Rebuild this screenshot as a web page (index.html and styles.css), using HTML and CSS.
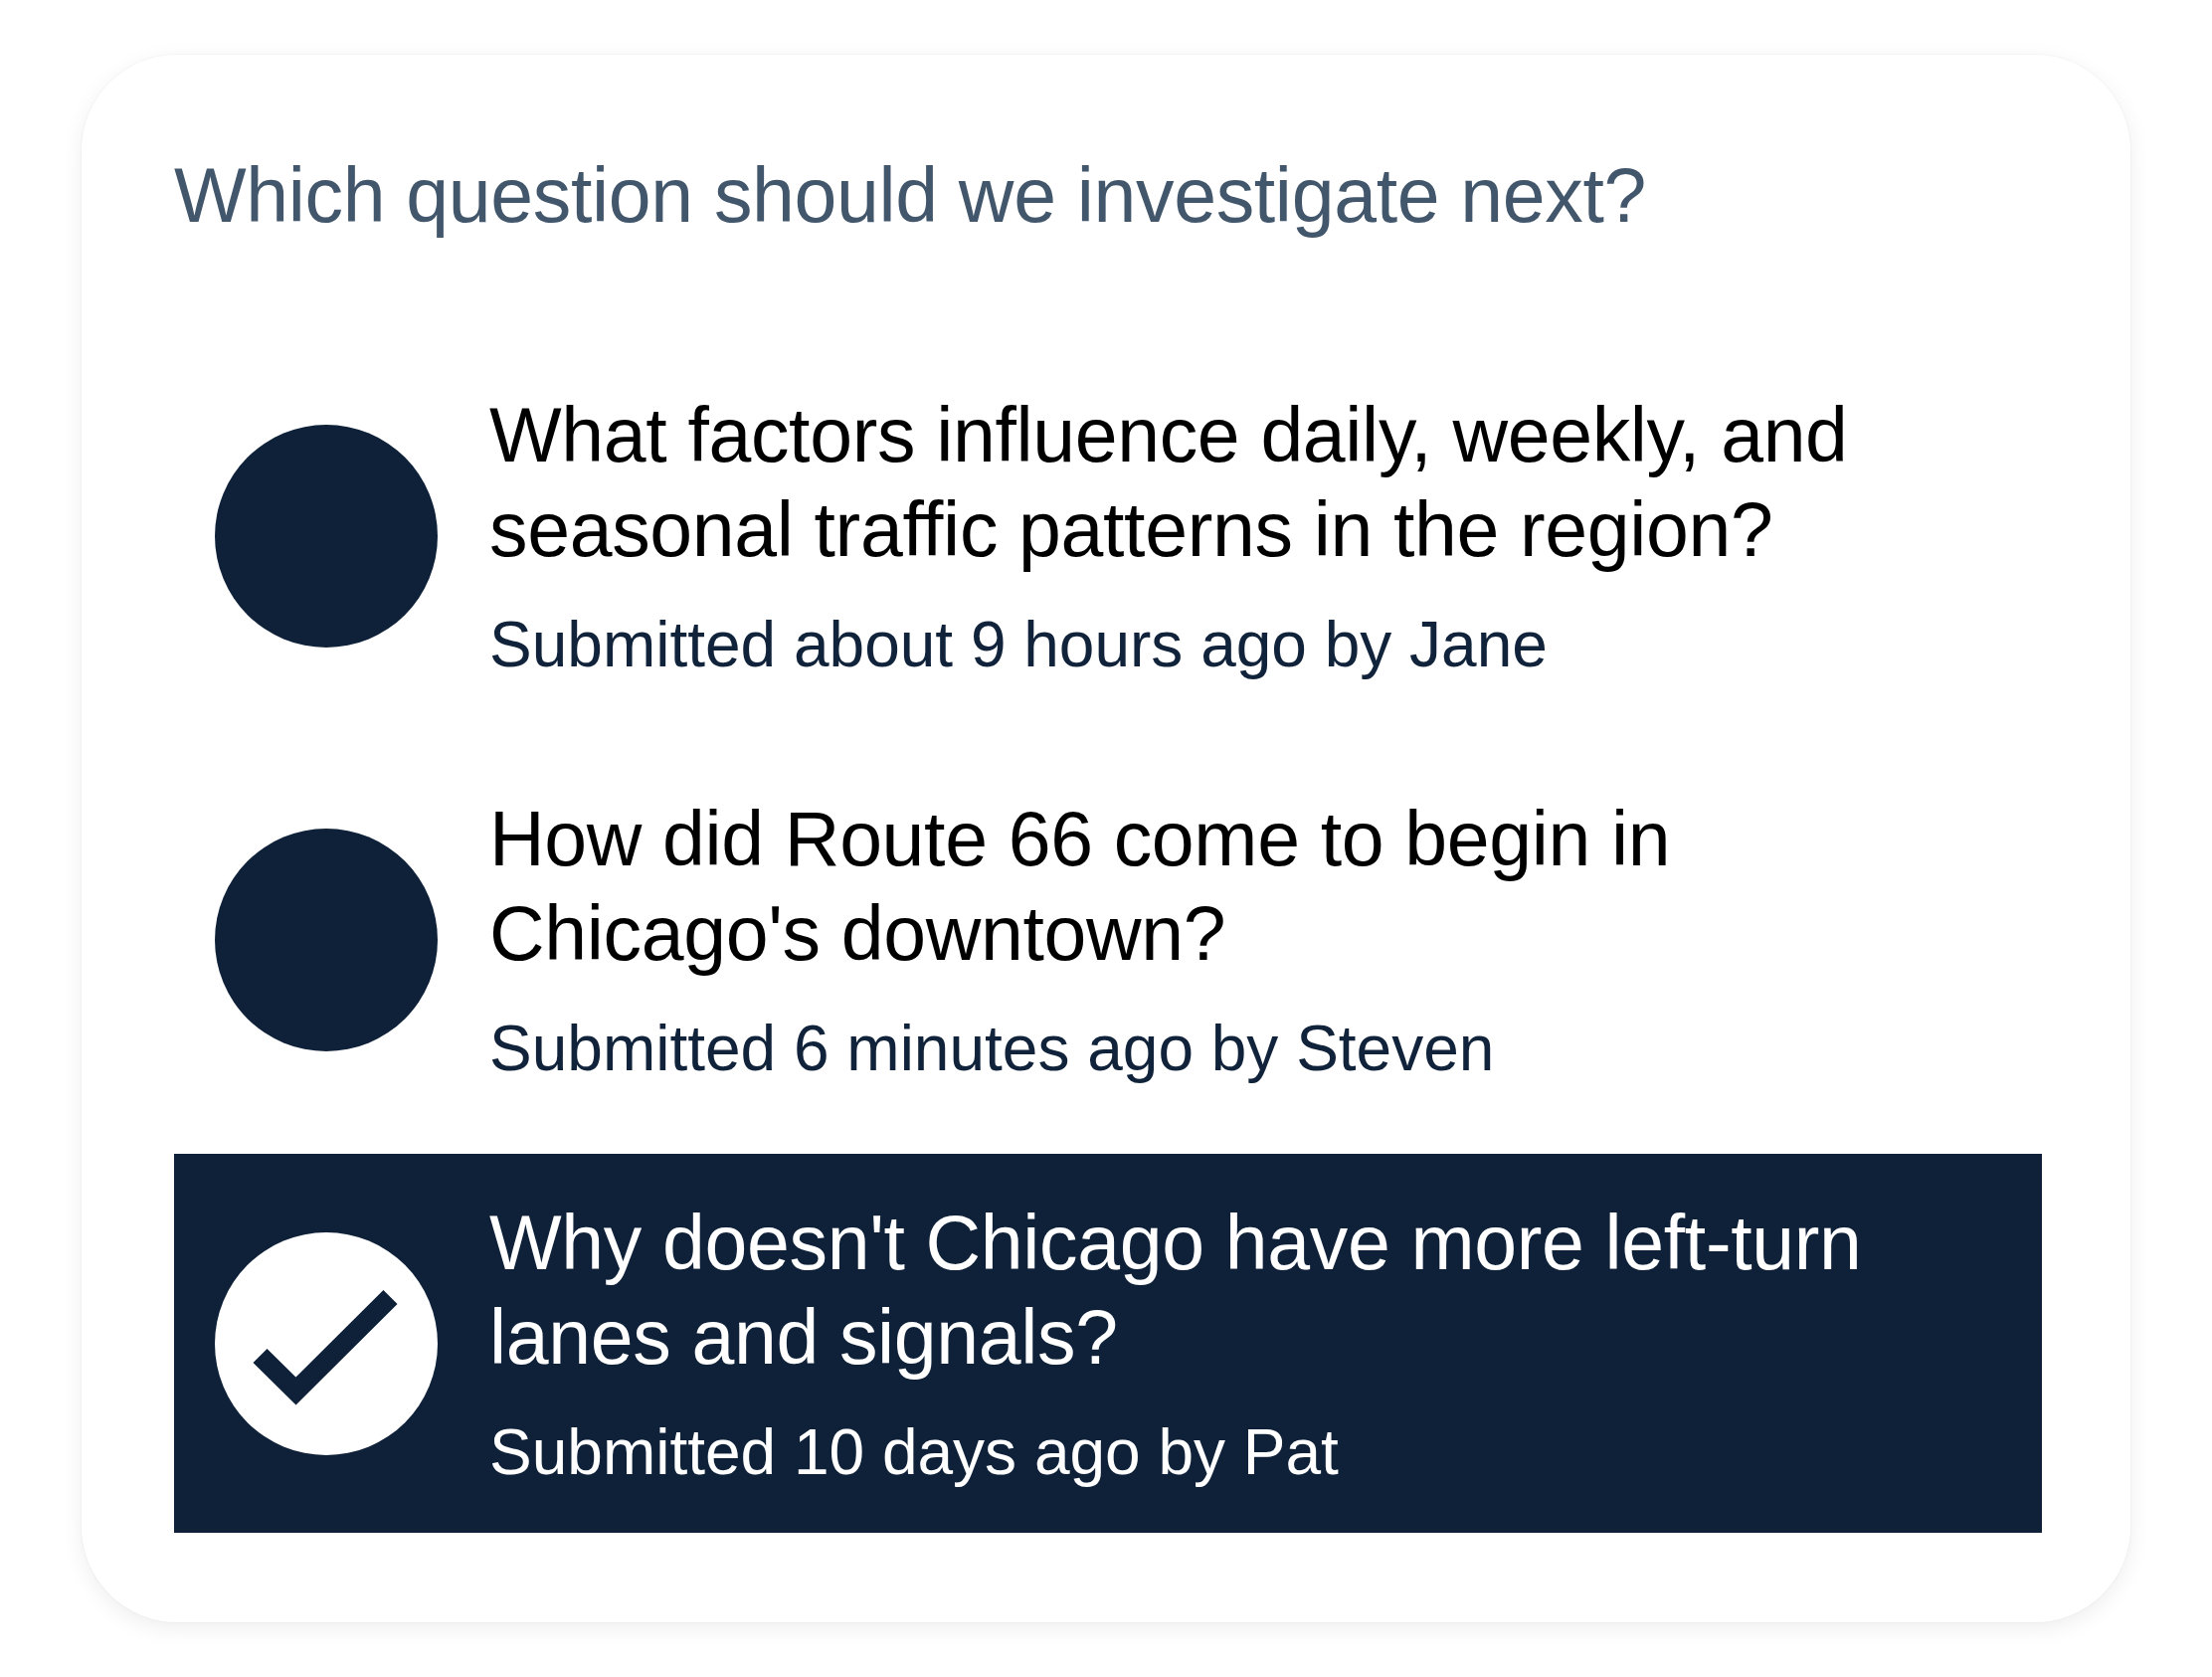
FILE: index.html
```html
<!DOCTYPE html>
<html lang="en">
<head>
<meta charset="utf-8">
<title>Which question should we investigate next?</title>
<link rel="stylesheet" href="styles.css">
</head>
<body>
<div class="card">
  <h1 class="heading">Which question should we investigate next?</h1>
  <ul class="options">
    <li class="option">
      <span class="radio"></span>
      <div class="text">
        <div class="title">What factors influence daily, weekly, and seasonal traffic patterns in the region?</div>
        <div class="meta">Submitted about 9 hours ago by Jane</div>
      </div>
    </li>
    <li class="option">
      <span class="radio"></span>
      <div class="text">
        <div class="title">How did Route 66 come to begin in Chicago's downtown?</div>
        <div class="meta">Submitted 6 minutes ago by Steven</div>
      </div>
    </li>
    <li class="option selected">
      <span class="radio">
        <svg class="check" viewBox="0 0 224 224" width="224" height="224" aria-hidden="true">
          <polyline points="45.5,124 81.5,159.5 176.5,65" fill="none" stroke="#0f2139" stroke-width="20" stroke-linejoin="miter" stroke-linecap="butt"/>
        </svg>
      </span>
      <div class="text">
        <div class="title">Why doesn't Chicago have more left-turn lanes and signals?</div>
        <div class="meta">Submitted 10 days ago by Pat</div>
      </div>
    </li>
  </ul>
</div>
</body>
</html>
```

FILE: styles.css
```css
html, body {
  margin: 0;
  padding: 0;
  background: #ffffff;
}

body {
  font-family: "Liberation Sans", Arial, Helvetica, sans-serif;
  padding: 55px 82px;
}

.card {
  box-sizing: border-box;
  width: 2060px;
  padding: 94px 89px 90px 93px;
  background: #ffffff;
  border-radius: 96px;
  box-shadow: 0 0 0 1px rgba(0, 0, 0, 0.025), 0 6px 22px rgba(0, 0, 0, 0.07);
}

.heading {
  margin: 0;
  font-size: 77px;
  line-height: 95px;
  font-weight: 400;
  letter-spacing: -0.33px;
  color: #43576c;
}

.options {
  list-style: none;
  margin: 104px 0 0 0;
  padding: 0;
  display: flex;
  flex-direction: column;
  gap: 25px;
}

.option {
  box-sizing: border-box;
  height: 381px;
  display: flex;
  align-items: center;
  padding: 0 41px;
  color: #000000;
}

.radio {
  flex: 0 0 224px;
  width: 224px;
  height: 224px;
  border-radius: 50%;
  background: #0f2139;
  display: flex;
  align-items: center;
  justify-content: center;
}

.check {
  display: block;
}

.text {
  margin-left: 52px;
  flex: 1 1 auto;
  min-width: 0;
}

.title {
  font-size: 77px;
  line-height: 95px;
  letter-spacing: -0.34px;
}

.meta {
  margin-top: 29px;
  font-size: 64px;
  line-height: 79px;
  color: #10233b;
}

.option.selected {
  background: #0f2139;
  color: #ffffff;
}

.option.selected .radio {
  background: #ffffff;
}

.option.selected .meta {
  color: #ffffff;
}
```
